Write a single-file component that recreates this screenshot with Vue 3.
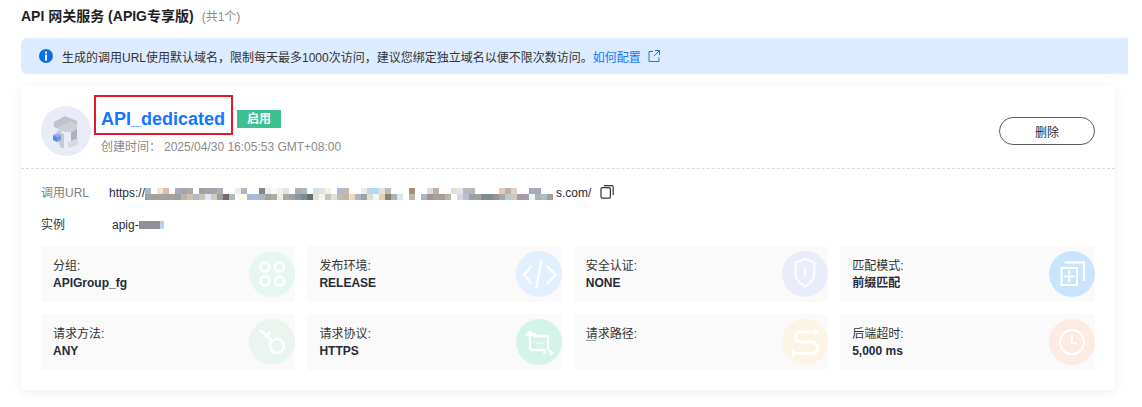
<script setup>
const row1 = 'a9b8c8 fff f3e3d4 dcbfa6 fff a6acbf a8a4ac b0a8ac fff a0a0a0 a4a4a4 a0a4b4 b0aeae fff fff e4eef8 b4b4c0 fff fff 8c8478 e8f0f4 fafafa f0f2ea dfe6f0 fff acacb0 a8b8c0 fff cfe0ec dbe4ea faf0dc fff a8bcd8 c4b8ac fff fff e4f0ec c0d4e8 b4d8f4 e4e0dc c4bcb0 fff fff fff a88c7c fff fff e0dcdc c0b0a4 fff fff ecdcc8 e0e4ec b8b8c0 b8b8c0 fff fff fff fff e4ccb8 c0b0a8 e0d0c4 fff fff a8a8b8 a8a8b8 fff fff'.split(' ')
const row2 = 'a0a19c a0a19c a3a39e a0a19c a3a49a a0a19c b8b4b0 d4bfa8 b6b4c4 c8c4bc e0e8f4 d4ccbc 9fa09a 7a6a6a b0b8c0 fff8f0 fffcf4 a8b8d4 a4bcdc a8b8bc a0a49c b0aca4 ecece4 a8a8a4 a0a0a0 8a96a0 7c8a94 6c6c6c e4e0d8 f4f4ec c8c4bc e4e0dc c4bcb0 c0b8ac f0d8c0 a8b4c8 9ca4a8 dcdcdc f4f4f4 e0d0b8 8c8070 a8b0b8 dce4f0 fff b8b8a8 fff a8b4c8 a8908c a0a09c a0a0a0 b8b4ac fff d8d8e4 b8c0d4 a0a0a4 a0a0a0 7c8a98 808890 a09088 a0a8b0 c0c8c8 d0c8c0 a09ca4 a89c9c e8f8f4 b4b0ac a0bcd8 ac9c98'.split(' ')
const mosaic = [...row1, ...row2]
const tiles = [
  { label: '分组:', value: 'APIGroup_fg', color: '#e6f6f3', icon: 'group' },
  { label: '发布环境:', value: 'RELEASE', color: '#e2effc', icon: 'code' },
  { label: '安全认证:', value: 'NONE', color: '#e9edf9', icon: 'shield' },
  { label: '匹配模式:', value: '前缀匹配', color: '#c9e4fc', icon: 'match' },
  { label: '请求方法:', value: 'ANY', color: '#e9f5ee', icon: 'key' },
  { label: '请求协议:', value: 'HTTPS', color: '#d4f3ea', icon: 'crop' },
  { label: '请求路径:', value: '', color: '#fcf4e4', icon: 'path', mark: true },
  { label: '后端超时:', value: '5,000 ms', color: '#fbebe3', icon: 'clock' }
]
</script>

<template>
  <div class="page">
    <div class="heading">
      <span class="heading-title">API 网关服务 (APIG专享版)</span>
      <span class="heading-count">(共1个)</span>
    </div>

    <div class="alert">
      <svg class="alert-icon" viewBox="0 0 14 14" width="14" height="14">
        <circle cx="7" cy="7" r="7" fill="#0b6fe0" />
        <rect x="6" y="2.600" width="2" height="2" fill="#fff" />
        <rect x="6" y="5.600" width="2" height="6" fill="#fff" />
      </svg>
      <span>生成的调用URL使用默认域名&#65292;限制每天最多1000次访问&#65292;建议您绑定独立域名以便不限次数访问。</span>
      <a class="alert-link">如何配置</a>
      <svg class="alert-ext" viewBox="0 0 12 12" width="12" height="12" fill="none" stroke="#1476ff" stroke-width="1">
        <path d="M5 1.500H1v10h10V7.500" />
        <path d="M7 .5h4.500V5M11.500 .5L6 6" />
      </svg>
    </div>

    <section class="card">
      <header class="card-head">
        <div class="avatar">
          <svg viewBox="0 0 50 50" width="50" height="50">
            <polygon points="13,16 24,10 36,15 36,20 25,26 13,21" fill="#bfc2ca" />
            <polygon points="18,21 29,15 36,19 36,38 30,41 30,27 24,24 18,27" fill="#cdd0d7" />
            <polygon points="30,27 36,23 36,38 30,41" fill="#aeb1bb" />
            <polygon points="16,24 23,28 23,42 20,42 16,32" fill="#c8cad2" />
            <polygon points="27,36 37,32 37,38 27,42" fill="#d8dae1" />
            <polygon points="12,29 16,27 20,29 16,31" fill="#8fb0ee" />
            <polygon points="12,29 16,31 16,36 12,34" fill="#5d86de" />
            <polygon points="20,29 16,31 16,36 20,34" fill="#7699e6" />
          </svg>
        </div>
        <div class="head-info">
          <div class="name-row">
            <h2 class="name">API_dedicated</h2>
            <span class="tag">启用</span>
            <span class="highlight"></span>
          </div>
          <div class="created">
            <span class="created-label">创建时间&#65306;</span>
            <span>2025/04/30 16:05:53 GMT+08:00</span>
          </div>
        </div>
        <button class="delete">删除</button>
      </header>

      <div class="card-body">
        <div class="meta-row">
          <span class="meta-label">调用URL</span>
          <span class="meta-url">https://<span class="mosaic"><i v-for="(c, i) in mosaic" :key="i" :style="{ background: '#' + c }"></i></span>s.com/</span>
          <svg class="copy" viewBox="0 0 14 14" width="14" height="14" fill="none" stroke="#333" stroke-width="1.200">
            <rect x="1" y="2.600" width="9.400" height="10.600" rx="1.400" />
            <path d="M4 .7h8a1.200 1.200 0 0 1 1.200 1.200V10" />
          </svg>
        </div>
        <div class="meta-row meta-row-2">
          <span class="meta-label meta-label-dark">实例</span>
          <span class="meta-inst">apig-<span class="inst-blur"><i></i><i></i><i></i><b></b></span></span>
        </div>

        <div class="tiles">
          <div v-for="t in tiles" :key="t.label" class="tile">
            <div class="tile-text">
              <div class="tile-label">{{ t.label }}</div>
              <div class="tile-value">{{ t.value }}</div>
              <span v-if="t.mark" class="tile-mark"></span>
            </div>
            <svg class="tile-icon" viewBox="0 0 46 46" width="46" height="46" fill="none" stroke="#fff" stroke-width="2">
              <ellipse cx="23" cy="23" rx="23" ry="23" :fill="t.color" stroke="none" />
              <g v-if="t.icon === 'group'" stroke-width="2.400">
                <circle cx="16" cy="16" r="4.500" />
                <circle cx="30.500" cy="16" r="4.500" />
                <circle cx="16" cy="30" r="4.500" />
                <circle cx="30.500" cy="30" r="4.500" />
              </g>
              <g v-else-if="t.icon === 'code'" stroke-width="2.600" opacity=".9">
                <path d="M15.500 15L8 24l7.500 8.500" />
                <path d="M31 15l8.500 9L31 32.500" />
                <path d="M25.700 8.500L20.300 37.500" />
              </g>
              <g v-else-if="t.icon === 'shield'" opacity=".9">
                <path d="M23 8l9.300 3.500V23c0 6-4.500 9.800-9.300 12.700-4.800-2.900-9.300-6.700-9.300-12.700V11.500z" />
                <path d="M23 17v8" />
              </g>
              <g v-else-if="t.icon === 'match'">
                <rect x="12.500" y="17" width="15.500" height="17" />
                <path d="M15 25.500H25.500M20.200 19.500V31.500" />
                <path d="M15.700 11.500H35V30" />
              </g>
              <g v-else-if="t.icon === 'key'" stroke-width="2.600">
                <circle cx="28" cy="27" r="7" />
                <path d="M11 11l12.500 11.500" />
                <path d="M17.500 17l4-4" />
              </g>
              <g v-else-if="t.icon === 'crop'" stroke-width="2.400">
                <path d="M10 16.500l4-3.500 3.500 3.500" />
                <path d="M14 14v15a2 2 0 0 0 2 2h12.500v4" />
                <path d="M19 14v3h11a2 2 0 0 1 2 2v11l4 4-2.500 2" />
                <path d="M20 24.300h1.400M23 24.300h1.400M26 24.300h1.400" stroke-width="1.600" />
              </g>
              <g v-else-if="t.icon === 'path'" stroke-width="2.800">
                <path d="M33 13H18.500a5 5 0 0 0 0 10H30a5.600 5.600 0 0 1 0 11.500H15" />
                <circle cx="33.500" cy="13" r="2.800" fill="#fff" stroke="none" />
                <polygon points="10,30 15.500,34.500 10,38.500" fill="#fff" stroke="none" />
              </g>
              <g v-else-if="t.icon === 'clock'" stroke-width="2.200">
                <circle cx="23" cy="23" r="12" />
                <path d="M23 16.500V24h4.500" />
              </g>
            </svg>
          </div>
        </div>
      </div>
    </section>
  </div>
</template>

<style>
html, body { margin: 0; background: #fff; overflow: hidden; }
</style>

<style scoped>
.page {
  width: 1142px;
  height: 407px;
  padding: 5px 0 0 21px;
  box-sizing: border-box;
  font-family: "Liberation Sans", "Noto Sans CJK SC", sans-serif;
  font-size: 12px;
  color: #252b3a;
  overflow: hidden;
}
.heading { display: flex; align-items: center; gap: 8px; height: 20px; }
.heading-title { font-size: 14px; font-weight: 700; color: #1f1f1f; }
.heading-count { font-size: 12px; color: #8a8a8a; }
.alert {
  display: flex;
  align-items: center;
  width: 1107px;
  height: 36px;
  margin-top: 13px;
  padding-left: 18px;
  box-sizing: border-box;
  background: #dcebff;
  border-radius: 6px 0 0 6px;
  color: #333;
}
.alert-icon { margin-right: 9px; flex: none; }
.alert-link { color: #1476ff; }
.alert-ext { margin-left: 7px; }
.card {
  width: 1094px;
  height: 304px;
  margin-top: 12px;
  background: #fff;
  border-radius: 4px;
  box-shadow: 0 2px 12px rgba(0, 0, 0, 0.07);
}
.card-head {
  display: flex;
  align-items: flex-start;
  height: 83px;
  padding: 20px 20px 0;
  box-sizing: border-box;
  border-bottom: 1px dashed #dcdcdc;
}
.avatar { width: 50px; height: 50px; border-radius: 50%; background: #e8ecf8; overflow: hidden; flex: none; }
.avatar svg { display: block; }
.head-info { margin-left: 10px; flex: 1; }
.name-row { position: relative; display: flex; align-items: center; height: 26px; }
.name { margin: 0; font-size: 18px; font-weight: 700; line-height: 26px; color: #1476ff; }
.tag {
  margin-left: 12px;
  width: 44px;
  height: 18px;
  line-height: 18px;
  text-align: center;
  background: #3cc08e;
  color: #fff;
  font-size: 12px;
  font-weight: 700;
}
.highlight {
  position: absolute;
  left: -7px;
  top: -11px;
  width: 139px;
  height: 40px;
  box-sizing: border-box;
  border: 2px solid #e5182b;
}
.created { display: flex; line-height: 18px; margin-top: 6px; color: #8a8a8a; }
.created-label { width: 63px; }
.delete {
  width: 96px;
  height: 28px;
  margin-top: 11px;
  padding: 0;
  background: #fff;
  border: 1px solid #5c5c5c;
  border-radius: 14px;
  font: inherit;
  color: #252b3a;
}
.card-body { padding: 14px 20px 0; }
.meta-row { position: relative; display: flex; align-items: center; height: 20px; line-height: 20px; }
.meta-row-2 { margin-top: 12px; }
.meta-label { width: 68px; color: #808080; flex: none; }
.meta-label-dark { color: #333; }
.meta-url { display: flex; align-items: center; color: #252b3a; white-space: nowrap; }
.mosaic {
  display: grid;
  grid-template-columns: repeat(68, 6px);
  grid-auto-rows: 6px;
  flex: none;
  margin: 2px 3px 0 0;
}
.mosaic i { display: block; }
.copy { margin-left: 9px; margin-top: -2px; flex: none; }
.meta-inst { display: flex; align-items: center; padding-left: 3px; }
.inst-blur { display: flex; height: 8px; }
.inst-blur i { width: 7px; background: #8f8f98; }
.inst-blur b { width: 4px; background: #b9d2ea; }
.tiles {
  display: grid;
  grid-template-columns: repeat(4, 254.4px);
  grid-auto-rows: 56px;
  gap: 12px;
  margin-top: 11px;
}
.tile {
  display: flex;
  justify-content: space-between;
  align-items: center;
  padding-left: 12px;
  background: #fafafa;
  border-radius: 4px;
}
.tile-text { position: relative; align-self: flex-start; padding-top: 11px; line-height: 18px; }
.tile-label { color: #333; height: 17px; }
.tile-value { font-weight: 700; color: #252b3a; height: 18px; }
.tile-mark { position: absolute; left: 0; top: 26px; width: 10px; height: 1px; background: #9a9ab0; }
.tile-icon { flex: none; }
</style>
